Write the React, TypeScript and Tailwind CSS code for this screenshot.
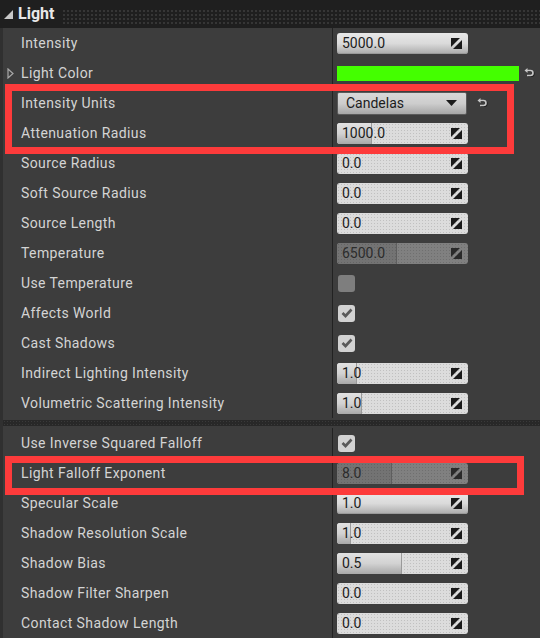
type Kind = "spin" | "slider" | "color" | "combo" | "check";

type Prop = {
  label: string;
  kind: Kind;
  value?: string;
  fill?: number;
  disabled?: boolean;
  checked?: boolean;
  expand?: boolean;
};

const general: Prop[] = [
  { label: "Intensity", kind: "spin", value: "5000.0" },
  { label: "Light Color", kind: "color", expand: true },
  { label: "Intensity Units", kind: "combo", value: "Candelas" },
  { label: "Attenuation Radius", kind: "slider", value: "1000.0", fill: 35 },
  { label: "Source Radius", kind: "slider", value: "0.0", fill: 0 },
  { label: "Soft Source Radius", kind: "slider", value: "0.0", fill: 0 },
  { label: "Source Length", kind: "slider", value: "0.0", fill: 0 },
  { label: "Temperature", kind: "slider", value: "6500.0", fill: 60, disabled: true },
  { label: "Use Temperature", kind: "check", checked: false, disabled: true },
  { label: "Affects World", kind: "check", checked: true },
  { label: "Cast Shadows", kind: "check", checked: true },
  { label: "Indirect Lighting Intensity", kind: "slider", value: "1.0", fill: 20 },
  { label: "Volumetric Scattering Intensity", kind: "slider", value: "1.0", fill: 25 },
];

const advanced: Prop[] = [
  { label: "Use Inverse Squared Falloff", kind: "check", checked: true },
  { label: "Light Falloff Exponent", kind: "slider", value: "8.0", fill: 55, disabled: true },
  { label: "Specular Scale", kind: "spin", value: "1.0" },
  { label: "Shadow Resolution Scale", kind: "slider", value: "1.0", fill: 14 },
  { label: "Shadow Bias", kind: "slider", value: "0.5", fill: 65 },
  { label: "Shadow Filter Sharpen", kind: "slider", value: "0.0", fill: 0 },
  { label: "Contact Shadow Length", kind: "slider", value: "0.0", fill: 0 },
];

function SpinIcon({ dark }: { dark?: boolean }) {
  return (
    <svg width="11" height="11" viewBox="0 0 11 11" className="shrink-0">
      <g fill={dark ? "#2a2a2a" : "#1a1a1a"}>
        <polygon points="0,0 9,0 0,9" />
        <polygon points="11,2 11,11 2,11" />
      </g>
    </svg>
  );
}

function ResetIcon() {
  return (
    <svg width="11" height="10" viewBox="0 0 11 10">
      <g fill="none" stroke="#1e1e1e" strokeWidth="1.6" transform="translate(0.8 0.8)">
        <path d="M3 2.5 H6.5 A2.5 2.5 0 0 1 6.5 7.5 H3" />
      </g>
      <g fill="none" stroke="#c8c8c8" strokeWidth="1.6">
        <path d="M3 2.5 H6.5 A2.5 2.5 0 0 1 6.5 7.5 H3" />
      </g>
      <polygon points="0.5,2.5 3.5,0 3.5,5" fill="#c8c8c8" />
    </svg>
  );
}

function Dots() {
  return <div className="absolute inset-0 bg-[radial-gradient(circle,rgba(0,0,0,0.13)_0.7px,transparent_0.8px)] bg-[length:3px_3px]" />;
}

function Slider({ p }: { p: Prop }) {
  const off = p.disabled;
  return (
    <div
      className={`relative flex h-[21px] w-[131px] items-center overflow-hidden rounded-[3px] ${
        off ? "bg-[#808080]" : "bg-[#dcdcdc]"
      }`}
    >
      <Dots />
      {p.fill ? (
        <div
          className={`absolute inset-y-0 left-0 border-r ${
            off
              ? "border-[#5e5e5e] bg-[#737373]"
              : "border-[#9a9a9a] bg-gradient-to-b from-[#e2e2e2] via-[#d2d2d2] to-[#a8a8a8]"
          }`}
          style={{ width: p.fill }}
        >
          {off && <Dots />}
        </div>
      ) : null}
      <span className={`relative flex-1 pl-[5px] text-[14px] ${off ? "text-[#2c2c2c]" : "text-[#1c1c1c]"}`}>{p.value}</span>
      <span className="relative mr-[6px]">
        <SpinIcon dark={off} />
      </span>
    </div>
  );
}

function Value({ p }: { p: Prop }) {
  if (p.kind === "spin")
    return (
      <div className="flex h-[21px] w-[131px] items-center rounded-[3px] bg-gradient-to-b from-[#e8e8e8] via-[#dadada] to-[#ababab] shadow-[inset_0_-1px_0_#9a9a9a]">
        <span className="flex-1 pl-[5px] text-[14px] text-[#1c1c1c]">{p.value}</span>
        <span className="mr-[6px]">
          <SpinIcon />
        </span>
      </div>
    );
  if (p.kind === "color")
    return (
      <div className="flex items-center gap-[5px]">
        <div className="h-[15px] w-[182px] bg-[#44ff00]" />
        <ResetIcon />
      </div>
    );
  if (p.kind === "combo")
    return (
      <div className="flex items-center gap-[10px]">
        <div className="flex h-[23px] w-[130px] items-center rounded-[2px] border border-[#5a5a5a] bg-gradient-to-b from-[#d8d8d8] via-[#cdcdcd] to-[#a6a6a6] pl-[8px] pr-[9px]">
          <span className="flex-1 text-[14px] text-[#1c1c1c]">{p.value}</span>
          <svg width="11" height="6" viewBox="0 0 11 6">
            <polygon points="0,0 11,0 5.5,6" fill="#1c1c1c" />
          </svg>
        </div>
        <ResetIcon />
      </div>
    );
  if (p.kind === "check")
    return (
      <div
        className={`ml-[1px] flex h-[17px] w-[17px] items-center justify-center rounded-[3px] ${
          p.disabled ? "bg-[#7e7e7e]" : "bg-[#d2d2d2]"
        }`}
      >
        {p.checked && (
          <svg width="12" height="10" viewBox="0 0 12 10">
            <polyline points="1.5,5 4.5,8 10.5,1.5" fill="none" stroke="#595959" strokeWidth="2.6" />
          </svg>
        )}
      </div>
    );
  return <Slider p={p} />;
}

function Row({ p }: { p: Prop }) {
  return (
    <div className="flex h-[30px]">
      <div className="flex w-[330px] items-center border-r border-[#222] pl-[4px]">
        <span className="flex w-[14px]">
          {p.expand && (
            <svg width="7" height="11" viewBox="0 0 7 11">
              <polygon points="1,1 6,5.5 1,10" fill="none" stroke="#a8a8a8" strokeWidth="1.2" />
            </svg>
          )}
        </span>
        <span className="text-[14px] tracking-[0.4px] text-[#d4d4d4]">{p.label}</span>
      </div>
      <div className="flex flex-1 items-center pl-[4px]">
        <Value p={p} />
      </div>
    </div>
  );
}

export default function App() {
  return (
    <div className="relative h-[638px] w-[540px] overflow-hidden bg-[#3d3d3d] font-['Roboto',sans-serif]">
      <div className="flex h-[28px] items-center bg-[#1f1f1f]">
        <svg width="9" height="9" viewBox="0 0 9 9" className="ml-[4px]">
          <polygon points="9,0 9,9 0,9" fill="#c8c8c8" />
        </svg>
        <span className="ml-[5px] text-[16px] font-bold text-[#e8e8e8]">Light</span>
        <div className="ml-[8px] mt-[6px] h-[16px] flex-1 bg-[radial-gradient(circle,#363636_0.8px,transparent_0.9px)] bg-[length:4px_4px]" />
      </div>
      <div className="border-l-[3px] border-[#303030]">
        {general.map((p) => (
          <Row key={p.label} p={p} />
        ))}
        <div className="flex h-[10px] items-center">
          <div className="h-[6px] w-full bg-[#282828] bg-[radial-gradient(circle,#3a3a3a_0.7px,transparent_0.8px)] bg-[length:3px_3px]" />
        </div>
        {advanced.map((p) => (
          <Row key={p.label} p={p} />
        ))}
      </div>
      <div className="absolute left-[5px] top-[84px] h-[70px] w-[509px] border-[7px] border-[#fd3b3b]" />
      <div className="absolute left-[5px] top-[456px] h-[39px] w-[519px] border-[7px] border-[#fd3b3b]" />
    </div>
  );
}
